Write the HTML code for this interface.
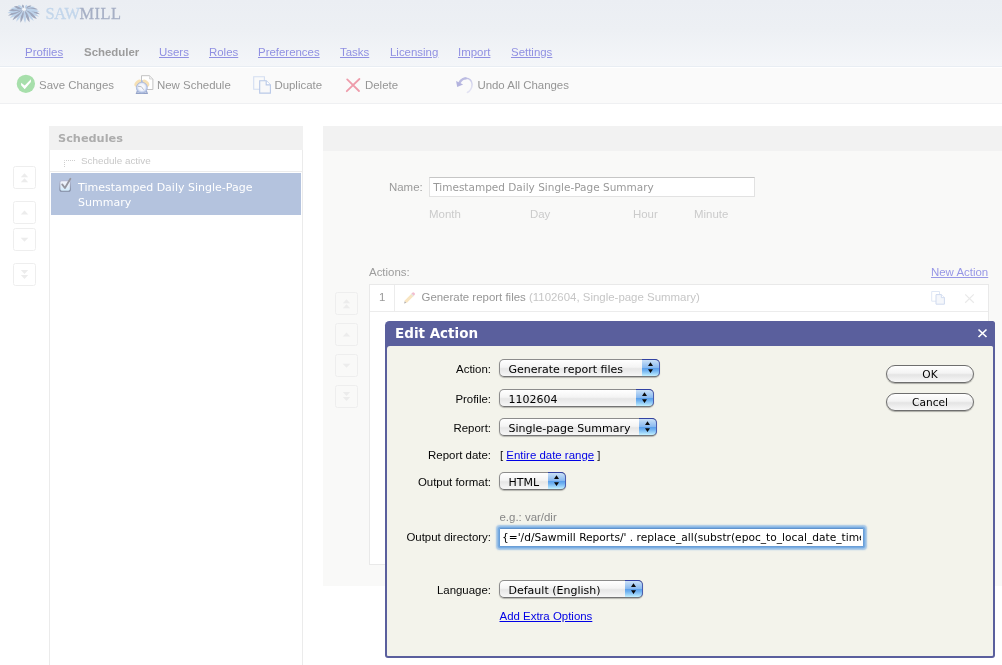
<!DOCTYPE html>
<html>
<head>
<meta charset="utf-8">
<title>Sawmill Scheduler</title>
<style>
html,body{margin:0;padding:0;}
body{width:1002px;height:665px;position:relative;overflow:hidden;background:#fff;will-change:transform;font-family:"Liberation Sans",Arial,sans-serif;font-size:11.45px;color:#999;}
.abs{position:absolute;white-space:nowrap;}
.lg{font-family:"DejaVu Sans","Liberation Sans",sans-serif;}
#header{position:absolute;left:0;top:0;width:1002px;height:66px;background:linear-gradient(to bottom,#ebeef3 0%,#edf0f4 45%,#f4f6f9 100%);}
#toolbar{position:absolute;left:0;top:66px;width:1002px;height:38px;background:#fafafa;border-top:1px solid #e8edf3;border-bottom:1px solid #eff0f2;box-sizing:border-box;box-shadow:inset 0 1px 0 #fff;}
.nav{position:absolute;top:45px;line-height:14px;color:#9090e2;text-decoration:underline;white-space:nowrap;}
.navb{position:absolute;top:45px;line-height:14px;color:#9c9c9c;font-weight:bold;white-space:nowrap;}
.tb{position:absolute;top:78px;line-height:14px;color:#959595;white-space:nowrap;}
.sbtn{position:absolute;width:23px;height:23px;border:1px solid #eeeeee;border-radius:2.5px;box-sizing:border-box;background:#fff;}
.sbtn2{position:absolute;width:23px;height:23px;border:1px solid #eeeeee;border-radius:2.5px;box-sizing:border-box;background:#f9f9f8;}
.lbl{position:absolute;line-height:14px;color:#060606;text-align:right;width:120px;left:371px;white-space:nowrap;}
.sel{position:absolute;height:18px;box-sizing:border-box;border:1px solid #8c8c8c;border-bottom-color:#747474;border-radius:5px;background:linear-gradient(to bottom,#ffffff 0%,#f4f4f4 45%,#e6e6e6 55%,#f7f7f7 100%);box-shadow:0 1px 1px rgba(0,0,0,0.25);color:#000;font-family:"DejaVu Sans",sans-serif;font-size:11px;line-height:19.6px;padding-left:8.5px;white-space:nowrap;}
.sel .cap{position:absolute;right:-1px;top:-1px;width:18px;height:18px;box-sizing:border-box;background:linear-gradient(to bottom,#cbe1f7 0%,#a8ccf3 25%,#8abaf0 47%,#5ca1ec 53%,#6fb1f0 66%,#a4d9fa 88%,#c6f3ff 100%);border-top:1px solid #3242a2;border-right:1px solid #4a5eb0;border-bottom:1px solid #74767c;border-left:0;border-radius:0 5px 5px 0;}
.sel .cap svg{position:absolute;left:0;top:-1px;}
.pbtn{position:absolute;left:886px;width:88px;height:18px;box-sizing:border-box;border:1px solid #6e6e6e;border-radius:9px;background:linear-gradient(to bottom,#ffffff 0%,#f3f3f3 45%,#e4e4e4 55%,#f8f8f8 100%);box-shadow:0 1px 1px rgba(0,0,0,0.3);color:#000;font-family:"DejaVu Sans",sans-serif;font-size:10.6px;line-height:16px;text-align:center;}
</style>
</head>
<body>

<!-- ===== header ===== -->
<div id="header"></div>
<svg class="abs" style="left:6px;top:3px" width="36" height="22" viewBox="0 0 36 22">
<path d="M19.5 6.6 Q25.9 11.1 34.0 11.3 Q27.6 5.5 19.5 6.6Z" fill="#9ea7bd"/>
<path d="M19.4 6.7 Q24.9 12.3 33.0 13.8 Q27.5 7.1 19.4 6.7Z" fill="#bdd3eb"/>
<path d="M19.3 6.9 Q23.3 13.3 30.9 16.1 Q26.8 8.7 19.3 6.9Z" fill="#9ea7bd"/>
<path d="M19.0 7.1 Q21.2 13.9 27.7 18.0 Q25.5 10.4 19.0 7.1Z" fill="#bdd3eb"/>
<path d="M18.6 7.2 Q18.7 14.1 23.6 19.3 Q23.6 12.0 18.6 7.2Z" fill="#9ea7bd"/>
<path d="M18.1 7.3 Q16.0 13.8 19.1 19.9 Q21.3 13.3 18.1 7.3Z" fill="#bdd3eb"/>
<path d="M17.6 7.3 Q13.5 12.7 14.5 19.7 Q18.6 14.0 17.6 7.3Z" fill="#9ea7bd"/>
<path d="M17.2 7.1 Q11.4 11.2 10.2 18.8 Q16.0 14.1 17.2 7.1Z" fill="#bdd3eb"/>
<path d="M16.8 7.0 Q9.7 9.6 6.5 17.3 Q13.6 13.7 16.8 7.0Z" fill="#9ea7bd"/>
<path d="M16.6 6.8 Q8.6 8.0 3.7 15.2 Q11.7 12.9 16.6 6.8Z" fill="#bdd3eb"/>
<path d="M16.5 6.7 Q8.2 6.3 2.0 12.8 Q10.4 11.8 16.5 6.7Z" fill="#9ea7bd"/>
<path d="M16.4 6.5 Q8.4 4.8 1.6 10.1 Q9.7 10.5 16.4 6.5Z" fill="#bdd3eb"/>
<path d="M16.4 6.4 Q9.2 3.6 2.6 7.6 Q9.7 9.2 16.4 6.4Z" fill="#9ea7bd"/>
<path d="M16.4 6.2 Q10.8 2.6 4.7 5.3 Q10.4 7.8 16.4 6.2Z" fill="#bdd3eb"/>
<path d="M16.5 6.0 Q12.9 2.0 7.9 3.4 Q11.5 6.6 16.5 6.0Z" fill="#9ea7bd"/>
<path d="M16.7 5.7 Q15.5 2.0 12.0 2.1 Q13.1 5.4 16.7 5.7Z" fill="#bdd3eb"/>
<path d="M17.5 5.3 Q18.8 2.8 16.5 1.5 Q15.2 4.0 17.5 5.3Z" fill="#9ea7bd"/>
<path d="M18.9 5.5 Q21.6 4.5 21.1 1.7 Q18.4 2.4 18.9 5.5Z" fill="#bdd3eb"/>
<path d="M19.4 5.9 Q23.4 5.9 25.4 2.6 Q21.4 2.0 19.4 5.9Z" fill="#9ea7bd"/>
<path d="M19.6 6.1 Q24.8 7.1 29.1 4.1 Q23.9 2.3 19.6 6.1Z" fill="#bdd3eb"/>
<path d="M19.6 6.3 Q25.8 8.4 31.9 6.2 Q25.7 3.0 19.6 6.3Z" fill="#9ea7bd"/>
<path d="M19.6 6.4 Q26.2 9.7 33.6 8.6 Q27.0 4.1 19.6 6.4Z" fill="#bdd3eb"/>
<ellipse cx="18" cy="6.3" rx="2" ry="1.1" fill="#f3f6fa"/>
</svg>
<div class="abs" style="left:45.5px;top:3.2px;font-family:'Liberation Serif',serif;font-size:16.4px;line-height:20px;transform:scale(1,1.07);transform-origin:0 0;"><span style="color:#c3d6eb;-webkit-text-stroke:0.35px #c3d6eb;letter-spacing:-0.35px">SAW</span><span style="color:#a6afc5;-webkit-text-stroke:0.25px #a6afc5;letter-spacing:0.45px">MILL</span></div>

<a class="nav" href="#" style="left:25px">Profiles</a>
<div class="navb" style="left:84px">Scheduler</div>
<a class="nav" href="#" style="left:159px">Users</a>
<a class="nav" href="#" style="left:209px">Roles</a>
<a class="nav" href="#" style="left:258px">Preferences</a>
<a class="nav" href="#" style="left:340px">Tasks</a>
<a class="nav" href="#" style="left:390px">Licensing</a>
<a class="nav" href="#" style="left:458px">Import</a>
<a class="nav" href="#" style="left:511px">Settings</a>

<!-- ===== toolbar ===== -->
<div id="toolbar"></div>
<!-- save -->
<svg class="abs" style="left:16px;top:74.1px" width="20" height="20" viewBox="0 0 20 20">
  <circle cx="9.87" cy="9.8" r="9.15" fill="#a7dfab"/>
  <path d="M5.1 8.8 L8.7 11.5 L14.9 5.2 L14.9 8 L8.7 15.2 L5.1 11.3 Z" fill="#fff"/>
</svg>
<div class="tb" style="left:39px">Save Changes</div>
<!-- new schedule -->
<svg class="abs" style="left:134px;top:74px" width="22" height="22" viewBox="0 0 22 22">
  <defs><radialGradient id="clk" cx="0.5" cy="0.45" r="0.55"><stop offset="0" stop-color="#ffffff"/><stop offset="0.55" stop-color="#eef2fb"/><stop offset="0.8" stop-color="#c3d0ec"/><stop offset="1" stop-color="#9fb0d6"/></radialGradient></defs>
  <path d="M7.5 1.7 H15.6 L18.9 5 V15.5 H7.5 Z" fill="#fff" stroke="#c2c2c2" stroke-width="1"/>
  <path d="M15.6 1.7 V5 H18.9" fill="#f0f0f0" stroke="#cfcfcf" stroke-width="0.8"/>
  <ellipse cx="4.2" cy="9.4" rx="4.2" ry="3" transform="rotate(-42 4.2 9.4)" fill="#f6e0b4"/>
  <ellipse cx="11.5" cy="9.4" rx="4.2" ry="3" transform="rotate(42 11.5 9.4)" fill="#f6e0b4"/>
  <path d="M7 6.2 H8.7 V8.5 H7 Z" fill="#a9bbe0"/>
  <path d="M2.1 18.4 L1.7 19.9 H14 L13.6 18.4 Z" fill="#92a1c6"/><path d="M3.6 16.8 L2.6 18.8 M12.1 16.8 L13.1 18.8" stroke="#9dabd0" stroke-width="1.4"/>
  <circle cx="7.85" cy="13.7" r="5.5" fill="url(#clk)" stroke="#a5b5da" stroke-width="0.7"/>
  <path d="M4.4 12.4 L7.4 12.7 L9.4 15.4" stroke="#b4b8c2" stroke-width="0.9" fill="none" stroke-linecap="round"/>
</svg>
<div class="tb" style="left:157px">New Schedule</div>
<!-- duplicate -->
<svg class="abs" style="left:252px;top:75px" width="20" height="20" viewBox="0 0 20 20">
  <path d="M1.7 1.7 H12.4 V14.2 H1.7 Z" fill="#fafafa" stroke="#d3def1" stroke-width="1.1" stroke-linejoin="miter"/>
  <path d="M7.7 5.7 H14.2 L18.4 9.9 V18.1 H7.7 Z" fill="#f8f8f9" stroke="#b9c9e8" stroke-width="1.1" stroke-linejoin="miter"/>
  <path d="M14.2 5.7 V9.9 H18.4" fill="#fff" stroke="#b9c9e8" stroke-width="1.1"/>
</svg>
<div class="tb" style="left:274.4px">Duplicate</div>
<!-- delete -->
<svg class="abs" style="left:345px;top:77px" width="16" height="16" viewBox="0 0 16 16">
  <path d="M2.2 2.4 L14 14 M14.4 2 L1.8 14.2" stroke="#ee9cab" stroke-width="1.8" fill="none" stroke-linecap="round"/>
</svg>
<div class="tb" style="left:365px">Delete</div>
<!-- undo -->
<svg class="abs" style="left:454px;top:75px" width="20" height="20" viewBox="0 0 20 20">
  <defs><linearGradient id="ug" gradientUnits="userSpaceOnUse" x1="6" y1="4" x2="15" y2="18"><stop offset="0" stop-color="#b4b4de"/><stop offset="0.4" stop-color="#cdcdea"/><stop offset="1" stop-color="#e6e6f4"/></linearGradient></defs>
  <path d="M5.6 7.2 C7 4.8 9.4 3.3 12 3.2 C15.2 3.2 18.1 5.6 18.1 9.2 C18.1 13 16 16 13.4 17.5" fill="none" stroke="url(#ug)" stroke-width="1.5" stroke-linecap="round"/>
  <path d="M5.6 7.6 C7 5 9.2 3.6 11.6 3.4" fill="none" stroke="#bcbce2" stroke-width="2.3" stroke-linecap="round"/>
  <path d="M2.1 6 L9.1 9.4 L3.2 12.1 Z" fill="#b3b3de"/>
</svg>
<div class="tb" style="left:477.4px">Undo All Changes</div>

<!-- ===== left schedules panel ===== -->
<div class="abs" style="left:49px;top:126px;width:254px;height:539px;box-sizing:border-box;border-left:1px solid #ebebeb;border-right:1px solid #ebebeb;background:#fff;"></div>
<div class="abs" style="left:49px;top:126px;width:254px;height:24px;background:#f1f1f1;"></div>
<div class="abs lg" style="left:58px;top:131px;font-weight:bold;font-size:11.3px;line-height:15px;color:#adadad;">Schedules</div>
<div class="abs" style="left:50px;top:171px;width:252px;height:1px;background:#ececec;"></div>
<svg class="abs" style="left:63px;top:159px" width="14" height="9" viewBox="0 0 14 9"><path d="M1.5 8 V1.5 H12" fill="none" stroke="#cfcfcf" stroke-width="1" stroke-dasharray="1 1"/></svg>
<div class="abs" style="left:81px;top:154px;font-size:9.9px;line-height:13px;color:#c8c8c8;">Schedule active</div>
<div class="abs" style="left:51px;top:173px;width:250px;height:42px;background:#b4c3de;"></div>
<!-- checkbox -->
<svg class="abs" style="left:58px;top:176px" width="15" height="17" viewBox="0 0 15 17">
  <defs><linearGradient id="cbf" x1="0" y1="0" x2="0" y2="1"><stop offset="0" stop-color="#f3f4fb"/><stop offset="0.5" stop-color="#e6effa"/><stop offset="1" stop-color="#cfeafb"/></linearGradient>
  <linearGradient id="cbs" x1="0" y1="0" x2="0" y2="1"><stop offset="0" stop-color="#b4bcd6"/><stop offset="1" stop-color="#8089a0"/></linearGradient></defs>
  <rect x="1.8" y="4.6" width="10.6" height="10.6" rx="2" fill="url(#cbf)" stroke="url(#cbs)" stroke-width="1.1"/>
  <path d="M4.2 8.4 L6.9 12 L12.4 2.8" fill="none" stroke="#95959e" stroke-width="1.8" stroke-linecap="round" stroke-linejoin="round"/>
</svg>
<div class="abs lg" style="left:78px;top:180.7px;font-size:11px;line-height:14.8px;color:#fff;">Timestamped Daily Single-Page</div>
<div class="abs lg" style="left:78px;top:195.7px;font-size:11px;line-height:14.8px;color:#fff;">Summary</div>

<!-- left side move buttons -->
<div class="sbtn" style="left:13px;top:166px"><svg width="21" height="21" viewBox="0 0 21 21" style="display:block"><path d="M10.5 6.3 L14.2 10.2 H6.8 Z M10.5 11.3 L14.2 15.2 H6.8 Z" fill="#ececec"/></svg></div>
<div class="sbtn" style="left:13px;top:201px"><svg width="21" height="21" viewBox="0 0 21 21" style="display:block"><path d="M10.5 8.4 L14.3 12.4 H6.7 Z" fill="#ececec"/></svg></div>
<div class="sbtn" style="left:13px;top:228px"><svg width="21" height="21" viewBox="0 0 21 21" style="display:block"><path d="M10.5 12.8 L14.3 8.8 H6.7 Z" fill="#ececec"/></svg></div>
<div class="sbtn" style="left:13px;top:263px"><svg width="21" height="21" viewBox="0 0 21 21" style="display:block"><path d="M10.5 10 L14.2 6.1 H6.8 Z M10.5 15 L14.2 11.1 H6.8 Z" fill="#ececec"/></svg></div>

<!-- ===== right panel ===== -->
<div class="abs" style="left:323px;top:126px;width:679px;height:460px;background:#f9f9f8;"></div>
<div class="abs" style="left:323px;top:126px;width:679px;height:25px;background:#f2f2f2;"></div>
<div class="abs" style="left:389px;top:180px;line-height:14px;color:#9a9a9a;">Name:</div>
<div class="abs lg" style="left:429px;top:177px;width:326px;height:20px;box-sizing:border-box;border:1px solid #e2e2e2;border-top-color:#c6c6c6;background:#fff;font-size:10.5px;line-height:18px;padding-left:3.2px;color:#999999;">Timestamped Daily Single-Page Summary</div>
<div class="abs" style="left:429px;top:207px;line-height:14px;color:#cbcbcb;">Month</div>
<div class="abs" style="left:530px;top:207px;line-height:14px;color:#cbcbcb;">Day</div>
<div class="abs" style="left:633px;top:207px;line-height:14px;color:#cbcbcb;">Hour</div>
<div class="abs" style="left:694px;top:207px;line-height:14px;color:#cbcbcb;">Minute</div>

<div class="abs" style="left:369px;top:265px;line-height:14px;color:#9d9d9d;">Actions:</div>
<a class="abs" href="#" style="left:931px;top:265px;line-height:14px;color:#9797e6;text-decoration:underline;">New Action</a>
<div class="abs" style="left:369px;top:284px;width:619.5px;height:281px;box-sizing:border-box;border:1px solid #e9e9e9;background:#fff;"></div>
<div class="abs" style="left:370px;top:311px;width:618px;height:1px;background:#ececec;"></div>
<div class="abs" style="left:394px;top:285px;width:1px;height:26px;background:#ececec;"></div>
<div class="abs" style="left:379px;top:290px;line-height:14px;color:#999999;">1</div>
<svg class="abs" style="left:402.4px;top:291px" width="14" height="14" viewBox="0 0 14 14">
  <path d="M2.2 12.4 L3 9.2 L9.4 2.8 L11.6 5 L5.2 11.4 Z" fill="#f8e5c2"/>
  <path d="M2.2 12.4 L2.7 10.3 L4.2 11.8 Z" fill="#a9adbb"/>
  <path d="M9.4 2.8 L10.6 1.6 Q11.4 0.9 12.2 1.7 L12.7 2.2 Q13.4 3 12.7 3.8 L11.6 5 Z" fill="#f3bdcf"/>
  <path d="M8.8 3.4 L9.6 2.6 L11.8 4.8 L11 5.6 Z" fill="#e4e8e0"/>
</svg>
<div class="abs" style="left:421.5px;top:290px;line-height:14px;color:#969696;">Generate report files <span style="color:#c6c6c6">(1102604, Single-page Summary)</span></div>
<svg class="abs" style="left:930px;top:290px" width="16" height="16" viewBox="0 0 16 16">
  <path d="M1.7 1.5 H9.5 V11.2 H1.7 Z" fill="#fff" stroke="#dfe7f5" stroke-width="1"/>
  <path d="M6 4.6 H11.4 L14.4 7.6 V14.2 H6 Z" fill="#f5f7fb" stroke="#cfdaef" stroke-width="1"/>
  <path d="M11.4 4.6 V7.6 H14.4" fill="#fff" stroke="#cfdaef" stroke-width="0.9"/>
</svg>
<svg class="abs" style="left:964px;top:293px" width="11" height="11" viewBox="0 0 11 11">
  <path d="M1.2 1.4 L9.8 9.8 M9.8 1.4 L1.2 9.8" stroke="#e9e9e9" stroke-width="1.2" fill="none"/>
</svg>

<!-- action move buttons -->
<div class="sbtn2" style="left:335px;top:292px"><svg width="21" height="21" viewBox="0 0 21 21" style="display:block"><path d="M10.5 6.3 L14.2 10.2 H6.8 Z M10.5 11.3 L14.2 15.2 H6.8 Z" fill="#ececec"/></svg></div>
<div class="sbtn2" style="left:335px;top:323px"><svg width="21" height="21" viewBox="0 0 21 21" style="display:block"><path d="M10.5 8.4 L14.3 12.4 H6.7 Z" fill="#ececec"/></svg></div>
<div class="sbtn2" style="left:335px;top:354px"><svg width="21" height="21" viewBox="0 0 21 21" style="display:block"><path d="M10.5 12.8 L14.3 8.8 H6.7 Z" fill="#ececec"/></svg></div>
<div class="sbtn2" style="left:335px;top:385px"><svg width="21" height="21" viewBox="0 0 21 21" style="display:block"><path d="M10.5 10 L14.2 6.1 H6.8 Z M10.5 15 L14.2 11.1 H6.8 Z" fill="#ececec"/></svg></div>

<!-- ===== Edit Action dialog ===== -->
<div class="abs" style="left:385px;top:320.5px;width:610px;height:337.5px;box-sizing:border-box;background:#5a5f9d;border-radius:4.5px 2.5px 3px 3px;"></div>
<div class="abs" style="left:387px;top:346px;width:606px;height:310px;background:#f3f3eb;border-radius:3px 1.5px 1px 1px;"></div>
<div class="abs lg" style="left:395px;top:324px;font-weight:bold;font-size:13.5px;line-height:18px;color:#fff;">Edit Action</div>
<svg class="abs" style="left:977px;top:328px" width="11" height="11" viewBox="0 0 11 11">
  <path d="M1.5 1.5 L9.5 9 M9.5 1.5 L1.5 9" stroke="#fff" stroke-width="1.7" fill="none"/>
</svg>

<div class="lbl" style="top:362px">Action:</div>
<div class="sel" style="left:499px;top:359px;width:161px">Generate report files<span class="cap"><svg width="18" height="18" viewBox="0 0 18 18"><path d="M8.5 3.3 L11 7 H6 Z M8.5 13.9 L11 10.2 H6 Z" fill="#0a0a0a"/></svg></span></div>
<div class="lbl" style="top:392px">Profile:</div>
<div class="sel" style="left:499px;top:389px;width:155px">1102604<span class="cap"><svg width="18" height="18" viewBox="0 0 18 18"><path d="M8.5 3.3 L11 7 H6 Z M8.5 13.9 L11 10.2 H6 Z" fill="#0a0a0a"/></svg></span></div>
<div class="lbl" style="top:421px">Report:</div>
<div class="sel" style="left:499px;top:418px;width:158px">Single-page Summary<span class="cap"><svg width="18" height="18" viewBox="0 0 18 18"><path d="M8.5 3.3 L11 7 H6 Z M8.5 13.9 L11 10.2 H6 Z" fill="#0a0a0a"/></svg></span></div>
<div class="lbl" style="top:448px">Report date:</div>
<div class="abs" style="left:500px;top:448px;line-height:14px;color:#111;">[ <a href="#" style="color:#0000e6;text-decoration:underline">Entire date range</a> ]</div>
<div class="lbl" style="top:475px">Output format:</div>
<div class="sel" style="left:499px;top:472px;width:67px">HTML<span class="cap"><svg width="18" height="18" viewBox="0 0 18 18"><path d="M8.5 3.3 L11 7 H6 Z M8.5 13.9 L11 10.2 H6 Z" fill="#0a0a0a"/></svg></span></div>
<div class="abs" style="left:499.5px;top:509.7px;line-height:14px;color:#868686;">e.g.: var/dir</div>
<div class="lbl" style="top:530px">Output directory:</div>
<div class="abs lg" style="left:499px;top:527.5px;width:365px;height:19.3px;box-sizing:border-box;border:1px solid #6a9ed6;border-top-color:#5f92cc;border-radius:1.5px;background:#fff;box-shadow:0 0 0 1.3px #78ace2,0 0 1.5px 2.3px rgba(125,175,228,0.7);font-size:10.65px;line-height:17.6px;color:#000;"><div style="margin:0 2.4px 0 2px;overflow:hidden;white-space:nowrap;">{='/d/Sawmill Reports/' . replace_all(substr(epoc_to_local_date_time(now()), 0, 11), '/', '-') . '/'=}</div></div>
<div class="lbl" style="top:582.6px">Language:</div>
<div class="sel" style="left:499px;top:580px;width:144px">Default (English)<span class="cap"><svg width="18" height="18" viewBox="0 0 18 18"><path d="M8.5 3.3 L11 7 H6 Z M8.5 13.9 L11 10.2 H6 Z" fill="#0a0a0a"/></svg></span></div>
<a class="abs" href="#" style="left:499.5px;top:609px;line-height:14px;color:#0000e6;text-decoration:underline;">Add Extra Options</a>

<div class="pbtn" style="top:365px">OK</div>
<div class="pbtn" style="top:393px">Cancel</div>

</body>
</html>
